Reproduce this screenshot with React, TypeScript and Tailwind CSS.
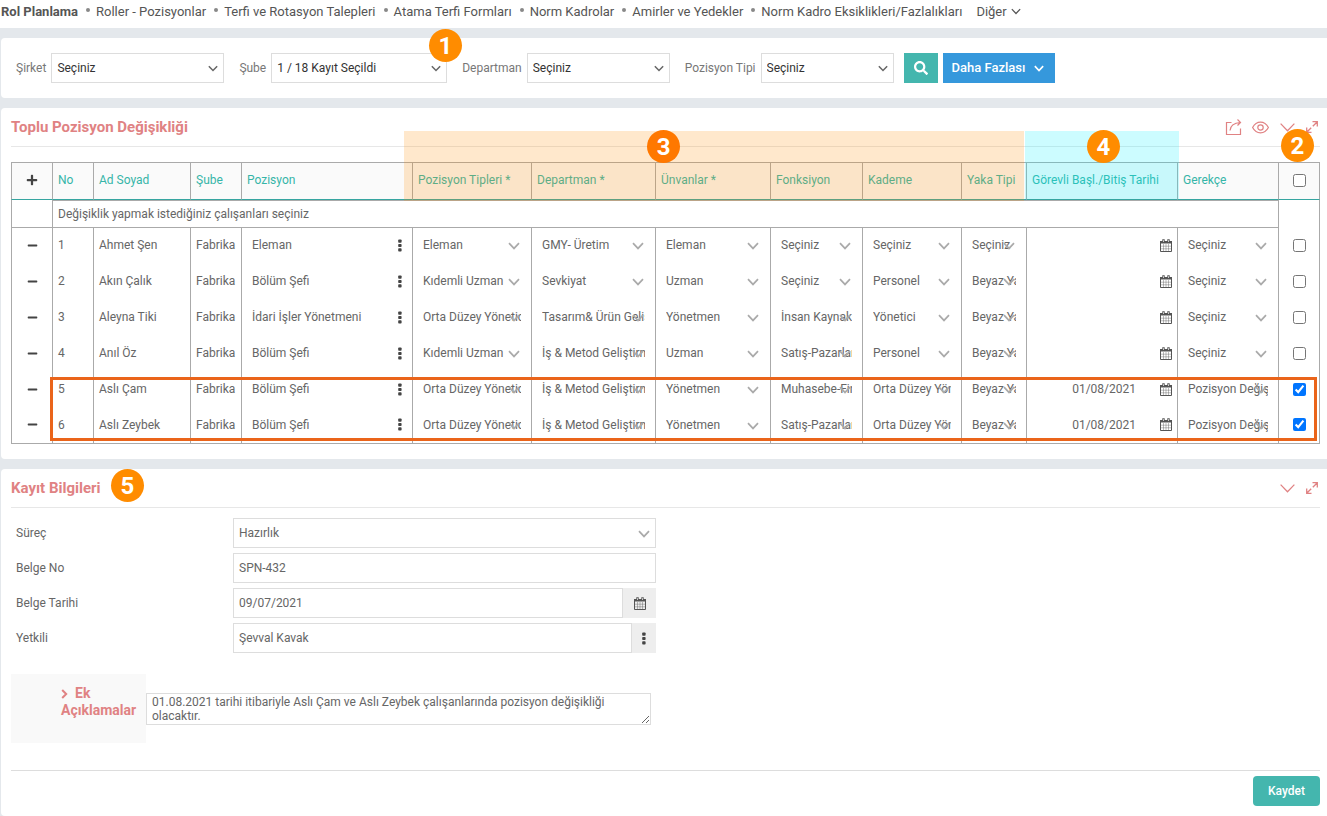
import { useState } from "react";
import { FaMinus, FaPlus, FaSearch } from "react-icons/fa";

const menuItems = [
    "Roller - Pozisyonlar",
    "Terfi ve Rotasyon Talepleri",
    "Atama Terfi Formları",
    "Norm Kadrolar",
    "Amirler ve Yedekler",
    "Norm Kadro Eksiklikleri/Fazlalıkları",
];

const rows = [
    { no: 1, name: "Ahmet Şen", branch: "Fabrika", position: "Eleman", type: "Eleman", department: "GMY- Üretim", title: "Eleman", job: "Seçiniz", grade: "Seçiniz", collar: "Seçiniz", date: "", reason: "Seçiniz" },
    { no: 2, name: "Akın Çalık", branch: "Fabrika", position: "Bölüm Şefi", type: "Kıdemli Uzman", department: "Sevkiyat", title: "Uzman", job: "Seçiniz", grade: "Personel", collar: "Beyaz Yaka", date: "", reason: "Seçiniz" },
    { no: 3, name: "Aleyna Tiki", branch: "Fabrika", position: "İdari İşler Yönetmeni", type: "Orta Düzey Yönetici", department: "Tasarım& Ürün Geliştirme", title: "Yönetmen", job: "İnsan Kaynakları", grade: "Yönetici", collar: "Beyaz Yaka", date: "", reason: "Seçiniz" },
    { no: 4, name: "Anıl Öz", branch: "Fabrika", position: "Bölüm Şefi", type: "Kıdemli Uzman", department: "İş & Metod Geliştirme", title: "Uzman", job: "Satış-Pazarlama", grade: "Personel", collar: "Beyaz Yaka", date: "", reason: "Seçiniz" },
    { no: 5, name: "Aslı Çam", branch: "Fabrika", position: "Bölüm Şefi", type: "Orta Düzey Yönetici", department: "İş & Metod Geliştirme", title: "Yönetmen", job: "Muhasebe-Finans", grade: "Orta Düzey Yönetici", collar: "Beyaz Yaka", date: "01/08/2021", reason: "Pozisyon Değişikliği" },
    { no: 6, name: "Aslı Zeybek", branch: "Fabrika", position: "Bölüm Şefi", type: "Orta Düzey Yönetici", department: "İş & Metod Geliştirme", title: "Yönetmen", job: "Satış-Pazarlama", grade: "Orta Düzey Yönetici", collar: "Beyaz Yaka", date: "01/08/2021", reason: "Pozisyon Değişikliği" },
];

const headers = [
    "No",
    "Ad Soyad",
    "Şube",
    "Pozisyon",
    "Pozisyon Tipleri *",
    "Departman *",
    "Ünvanlar *",
    "Fonksiyon",
    "Kademe",
    "Yaka Tipi",
    "Görevli Başl./Bitiş Tarihi",
    "Gerekçe",
];

function Chevron({ className }: { className: string }) {
    return (
        <svg viewBox="0 0 12 8" className={className} fill="none" stroke="currentColor" aria-hidden="true">
            <path d="M1 1.2 6 6.4 11 1.2" />
        </svg>
    );
}

function CalendarIcon() {
    return (
        <svg viewBox="0 0 12 13" className="h-[13px] w-3 text-[#555]" fill="none" stroke="currentColor" aria-hidden="true">
            <path d="M.5 2.5h11v10H.5z" />
            <path d="M0 2h12v2.5H0z" fill="currentColor" stroke="none" />
            <path d="M3.5 .3v3M8.5 .3v3" strokeWidth="2.400" />
            <path d="M3.5 1.200v1.800M8.5 1.200v1.800" stroke="#fff" strokeWidth=".7" />
            <path d="M3.5 5v7M6 5v7M8.5 5v7M1 7.200h10M1 9.800h10" strokeWidth=".4" />
        </svg>
    );
}

function DotsIcon() {
    return (
        <svg viewBox="0 0 4 13" className="h-[13px] w-1" fill="#444" aria-hidden="true">
            <rect x="0.2" y="0.5" width="3.4" height="3.2" rx=".8" />
            <rect x="0.2" y="4.9" width="3.4" height="3.2" rx=".8" />
            <rect x="0.2" y="9.3" width="3.4" height="3.2" rx=".8" />
        </svg>
    );
}

function ExpandIcon() {
    return (
        <svg viewBox="0 0 12 12" className="h-3 w-3" fill="none" stroke="currentColor" strokeWidth="1.3" aria-hidden="true">
            <path d="M6.5.7h4.800v4.800M11.300.7 6.800 5.200M5.500 11.300H.7V6.500M.7 11.300l4.500-4.500" />
        </svg>
    );
}

function ShareIcon() {
    return (
        <svg viewBox="0 0 17 17" className="h-[17px] w-[17px]" fill="none" stroke="currentColor" strokeWidth="1.200" aria-hidden="true">
            <path d="M6.500 3.500h-5v12h14v-6" />
            <path d="M5 11.500c.3-4.500 3.500-7.500 10.500-8M12.500.5l3 3-3 3" />
        </svg>
    );
}

function EyeIcon() {
    return (
        <svg viewBox="0 0 17 13" className="h-[13px] w-[17px]" fill="none" stroke="currentColor" strokeWidth="1.200" aria-hidden="true">
            <path d="M.6 6.500C2.500 3 5.200 1.200 8.500 1.200S14.500 3 16.400 6.500c-1.900 3.500-4.600 5.300-7.900 5.300S2.500 10 .6 6.500z" />
            <circle cx="8.500" cy="6.500" r="2.700" />
        </svg>
    );
}

function Badge({ value, className }: { value: number; className: string }) {
    return (
        <span className={`absolute flex h-[33px] w-[33px] items-center justify-center rounded-full text-2xl font-bold text-white ${className}`}>
            {value}
        </span>
    );
}

function FilterSelect({ id, label, value, className }: { id: string; label: string; value: string; className: string }) {
    return (
        <div className="flex items-center gap-[5px]">
            <label htmlFor={id} className="whitespace-nowrap text-[#777]">
                {label}
            </label>
            <div className={`relative ${className}`}>
                <select id={id} className="h-[30px] w-full appearance-none border border-[#ddd] bg-white pr-6 pl-[5px] text-[#333]">
                    <option>{value}</option>
                </select>
                <Chevron className="pointer-events-none absolute top-3 right-[6px] h-[7px] w-[10px] stroke-[1.800] text-[#666]" />
            </div>
        </div>
    );
}

function CellSelect({ label, value }: { label: string; value: string }) {
    return (
        <div className="relative">
            <select aria-label={label} defaultValue={value} className="h-[30px] w-full appearance-none bg-transparent px-[10px]">
                <option>{value}</option>
            </select>
            <Chevron className="pointer-events-none absolute top-3 right-[11px] h-2 w-3 stroke-[1.700] text-[#aaa]" />
        </div>
    );
}

export default function App() {
    const [selected, setSelected] = useState<number[]>([5, 6]);

    const toggleRow = (no: number) => {
        setSelected(selected.includes(no) ? selected.filter((n) => n !== no) : [...selected, no]);
    };

    const toggleAll = () => {
        setSelected(selected.length === rows.length ? [] : rows.map((r) => r.no));
    };

    return (
        <div className="flex min-h-screen flex-col gap-[10px] bg-[#e4e8ec] font-[Roboto,sans-serif] text-xs text-[#666]">

            {/* Top menu */}
            <nav className="flex h-7 items-center bg-white pb-1 pl-px text-[13px] whitespace-nowrap text-[#555]">
                <a href="#" className="font-bold">Rol Planlama</a>
                {menuItems.map((item) => (
                    <a key={item} href="#" className="ml-2 flex items-center gap-[6px]">
                        <span className="mb-1 h-1 w-1 rounded-full bg-[#888]" />
                        {item}
                    </a>
                ))}
                <button type="button" className="ml-[14px] flex items-center gap-1">
                    Diğer
                    <Chevron className="h-[7px] w-[10px] stroke-[1.500]" />
                </button>
            </nav>

            {/* Filters */}
            <section className="relative ml-px flex h-[60px] items-center gap-[15px] rounded-l bg-white pl-[15px]">
                <FilterSelect id="company" label="Şirket" value="Seçiniz" className="w-[173px]" />
                <FilterSelect id="branch" label="Şube" value="1 / 18 Kayıt Seçildi" className="w-[176px]" />
                <FilterSelect id="department" label="Departman" value="Seçiniz" className="w-[143px]" />
                <FilterSelect id="positionType" label="Pozisyon Tipi" value="Seçiniz" className="w-[133px]" />
                <div className="-ml-[5px] flex gap-[5px] text-white">
                    <button type="button" aria-label="Ara" className="flex h-[30px] w-[34px] items-center justify-center bg-[#44b6ae]">
                        <FaSearch className="h-[14px] w-[14px]" />
                    </button>
                    <button type="button" className="flex h-[30px] w-28 items-center gap-[9px] bg-[#3598dc] pl-[9px] text-[13px] font-medium">
                        Daha Fazlası
                        <Chevron className="h-[7px] w-[10px] stroke-2" />
                    </button>
                </div>
                <Badge value={1} className="-top-[9px] left-[428px] bg-[#ff8c00]" />
            </section>

            {/* Bulk position change */}
            <section className="ml-px rounded-l bg-white pr-[7px] pb-[15px] pl-[10px]">
                <div className="flex h-[39px] items-center justify-between border-b border-[#e7e7e7] text-[#e08283]">
                    <h2 className="pt-[2px] text-[15px] font-bold">Toplu Pozisyon Değişikliği</h2>
                    <div className="flex items-center gap-[10px] pr-[2px]">
                        <button type="button" aria-label="Paylaş"><ShareIcon /></button>
                        <button type="button" aria-label="Göster"><EyeIcon /></button>
                        <button type="button" aria-label="Daralt"><Chevron className="h-[11px] w-[17px] stroke-[.9]" /></button>
                        <button type="button" aria-label="Genişlet"><ExpandIcon /></button>
                    </div>
                </div>

                <div className="relative mt-[15px]">
                    <table className="w-full table-fixed border-separate border-spacing-0 text-left">
                        <colgroup>
                            <col className="w-[42px]" />
                            <col className="w-[41px]" />
                            <col className="w-[97px]" />
                            <col className="w-[51px]" />
                            <col className="w-[171px]" />
                            <col className="w-[119px]" />
                            <col className="w-[124px]" />
                            <col className="w-[115px]" />
                            <col className="w-[92px]" />
                            <col className="w-[99px]" />
                            <col className="w-[65px]" />
                            <col className="w-[151px]" />
                            <col className="w-[101px]" />
                            <col className="w-[41px]" />
                        </colgroup>
                        <thead>
                            <tr className="h-[38px] bg-[#fafafa] text-[#36b5a8] *:pb-[2px]">
                                <th className="border border-[#aaa] border-b-[#36a5a0]">
                                    <button type="button" aria-label="Satır ekle" className="flex w-full justify-center">
                                        <FaPlus className="h-3 w-3 text-[#444]" />
                                    </button>
                                </th>
                                {headers.map((header) => (
                                    <th
                                        key={header}
                                        className="overflow-hidden border-t border-r border-b border-[#aaa] border-b-[#36a5a0] pl-[5px] font-normal whitespace-nowrap"
                                    >
                                        {header}
                                    </th>
                                ))}
                                <th className="border-t border-r border-b border-[#aaa] border-b-[#36a5a0]">
                                    <input
                                        type="checkbox"
                                        aria-label="Tümünü seç"
                                        checked={selected.length === rows.length}
                                        onChange={toggleAll}
                                        className="mx-auto block h-[13px] w-[13px]"
                                    />
                                </th>
                            </tr>
                        </thead>
                        <tbody>
                            <tr className="h-7">
                                <td className="border-r border-b border-l border-[#aaa]" />
                                <td colSpan={12} className="border-t border-r border-b border-[#aaa] pl-[5px]">
                                    Değişiklik yapmak istediğiniz çalışanları seçiniz
                                </td>
                                <td className="border-r border-[#aaa]" />
                            </tr>
                            {rows.map((row) => (
                                <tr key={row.no} className="h-9 *:border-r *:border-[#aaa] *:pb-[2px] last:*:border-b">
                                    <td className="border-l">
                                        <button type="button" aria-label="Satırı sil" className="flex w-full justify-center">
                                            <FaMinus className="h-[11px] w-[11px] text-[#444]" />
                                        </button>
                                    </td>
                                    <td className="pl-[5px]">{row.no}</td>
                                    <td className="pl-[5px] whitespace-nowrap">{row.name}</td>
                                    <td className="pl-[5px] whitespace-nowrap">{row.branch}</td>
                                    <td>
                                        <div className="flex items-center pr-[10px] pl-[10px]">
                                            <input type="text" aria-label="Pozisyon" defaultValue={row.position} className="h-[30px] min-w-0 flex-1" />
                                            <button type="button" aria-label="Pozisyon seç"><DotsIcon /></button>
                                        </div>
                                    </td>
                                    <td><CellSelect label="Pozisyon Tipleri" value={row.type} /></td>
                                    <td><CellSelect label="Departman" value={row.department} /></td>
                                    <td><CellSelect label="Ünvanlar" value={row.title} /></td>
                                    <td><CellSelect label="Fonksiyon" value={row.job} /></td>
                                    <td><CellSelect label="Kademe" value={row.grade} /></td>
                                    <td><CellSelect label="Yaka Tipi" value={row.collar} /></td>
                                    <td>
                                        <div className="flex items-center pr-[5px]">
                                            <input type="text" aria-label="Tarih" defaultValue={row.date} className="h-[30px] min-w-0 flex-1 pr-6 text-right" />
                                            <button type="button" aria-label="Tarih seç"><CalendarIcon /></button>
                                        </div>
                                    </td>
                                    <td><CellSelect label="Gerekçe" value={row.reason} /></td>
                                    <td>
                                        <input
                                            type="checkbox"
                                            aria-label={`${row.name} seç`}
                                            checked={selected.includes(row.no)}
                                            onChange={() => toggleRow(row.no)}
                                            className="mx-auto block h-[13px] w-[13px]"
                                        />
                                    </td>
                                </tr>
                            ))}
                        </tbody>
                    </table>

                    {/* Highlights over the table */}
                    <div className="pointer-events-none absolute -top-[31px] right-[22.6%] left-[30%] h-[70px] bg-[#ff8c00]/20" />
                    <div className="pointer-events-none absolute -top-[31px] right-[10.8%] left-[77.5%] h-[68px] bg-[#00f0ff]/20" />
                    <div className="pointer-events-none absolute right-[3px] bottom-[3px] left-[39px] h-16 border-3 border-[#ea641a]" />
                    <Badge value={3} className="-top-8 left-[48.6%] bg-[#ff7800]" />
                    <Badge value={4} className="-top-8 left-[82.2%] bg-[#ff8c00]" />
                    <Badge value={2} className="-top-[33px] right-[6px] bg-[#ff8c00]" />
                </div>
            </section>

            {/* Record info */}
            <section className="ml-px flex-1 rounded-l bg-white pr-[7px] pb-[10px] pl-[10px]">
                <div className="relative flex h-[39px] items-center justify-between border-b border-[#e7e7e7] text-[#e08283]">
                    <h2 className="pt-[2px] text-[15px] font-bold">Kayıt Bilgileri</h2>
                    <div className="flex items-center gap-[10px] pr-[2px]">
                        <button type="button" aria-label="Daralt"><Chevron className="h-[11px] w-[17px] stroke-[.9]" /></button>
                        <button type="button" aria-label="Genişlet"><ExpandIcon /></button>
                    </div>
                    <Badge value={5} className="top-0 left-[100px] bg-[#ff8c00]" />
                </div>

                <div className="grid max-w-[645px] grid-cols-[217px_1fr] items-center gap-y-[5px] pt-[10px] pl-[5px]">
                    <label htmlFor="process">Süreç</label>
                    <div className="relative">
                        <select id="process" className="h-[30px] w-full appearance-none border border-[#ddd] px-[5px]">
                            <option>Hazırlık</option>
                        </select>
                        <Chevron className="pointer-events-none absolute top-3 right-[6px] h-2 w-3 stroke-[1.700] text-[#aaa]" />
                    </div>

                    <label htmlFor="docNo">Belge No</label>
                    <input id="docNo" type="text" defaultValue="SPN-432" className="h-[30px] border border-[#ddd] px-[5px]" />

                    <label htmlFor="docDate">Belge Tarihi</label>
                    <div className="flex">
                        <input id="docDate" type="text" defaultValue="09/07/2021" className="h-[30px] min-w-0 flex-1 border border-[#ddd] px-[5px]" />
                        <button type="button" aria-label="Tarih seç" className="flex w-[33px] items-center justify-center bg-[#eee]">
                            <CalendarIcon />
                        </button>
                    </div>

                    <label htmlFor="owner">Yetkili</label>
                    <div className="flex">
                        <input id="owner" type="text" defaultValue="Şevval Kavak" className="h-[30px] min-w-0 flex-1 border border-[#ddd] px-[5px]" />
                        <button type="button" aria-label="Yetkili seç" className="flex w-6 items-center justify-center bg-[#eee]">
                            <DotsIcon />
                        </button>
                    </div>
                </div>

                {/* Extra notes */}
                <div className="mt-[21px] flex max-w-[640px] items-center">
                    <label
                        htmlFor="notes"
                        className="h-[69px] w-[135px] bg-[#f9f9f9] pt-[11px] pl-[50px] text-sm leading-[17px] font-bold text-[#e08283]"
                    >
                        <svg viewBox="0 0 7 10" className="mr-[7px] inline-block h-[10px] w-[7px]" fill="none" stroke="currentColor" strokeWidth="2" aria-hidden="true">
                            <path d="M1.200 1 5.200 5l-4 4" />
                        </svg>
                        Ek Açıklamalar
                    </label>
                    <textarea
                        id="notes"
                        className="h-8 flex-1 overflow-hidden border border-[#ddd] px-[5px] pt-[1px] leading-[14px]"
                        defaultValue="01.08.2021 tarihi itibariyle Aslı Çam ve Aslı Zeybek çalışanlarında pozisyon değişikliği olacaktır."
                    />
                </div>

                <div className="mt-[27px] flex justify-end border-t border-[#ddd] pt-[5px]">
                    <button type="button" className="h-[30px] w-[67px] rounded bg-[#44b6ae] font-medium text-white">
                        Kaydet
                    </button>
                </div>
            </section>
        </div>
    );
}
